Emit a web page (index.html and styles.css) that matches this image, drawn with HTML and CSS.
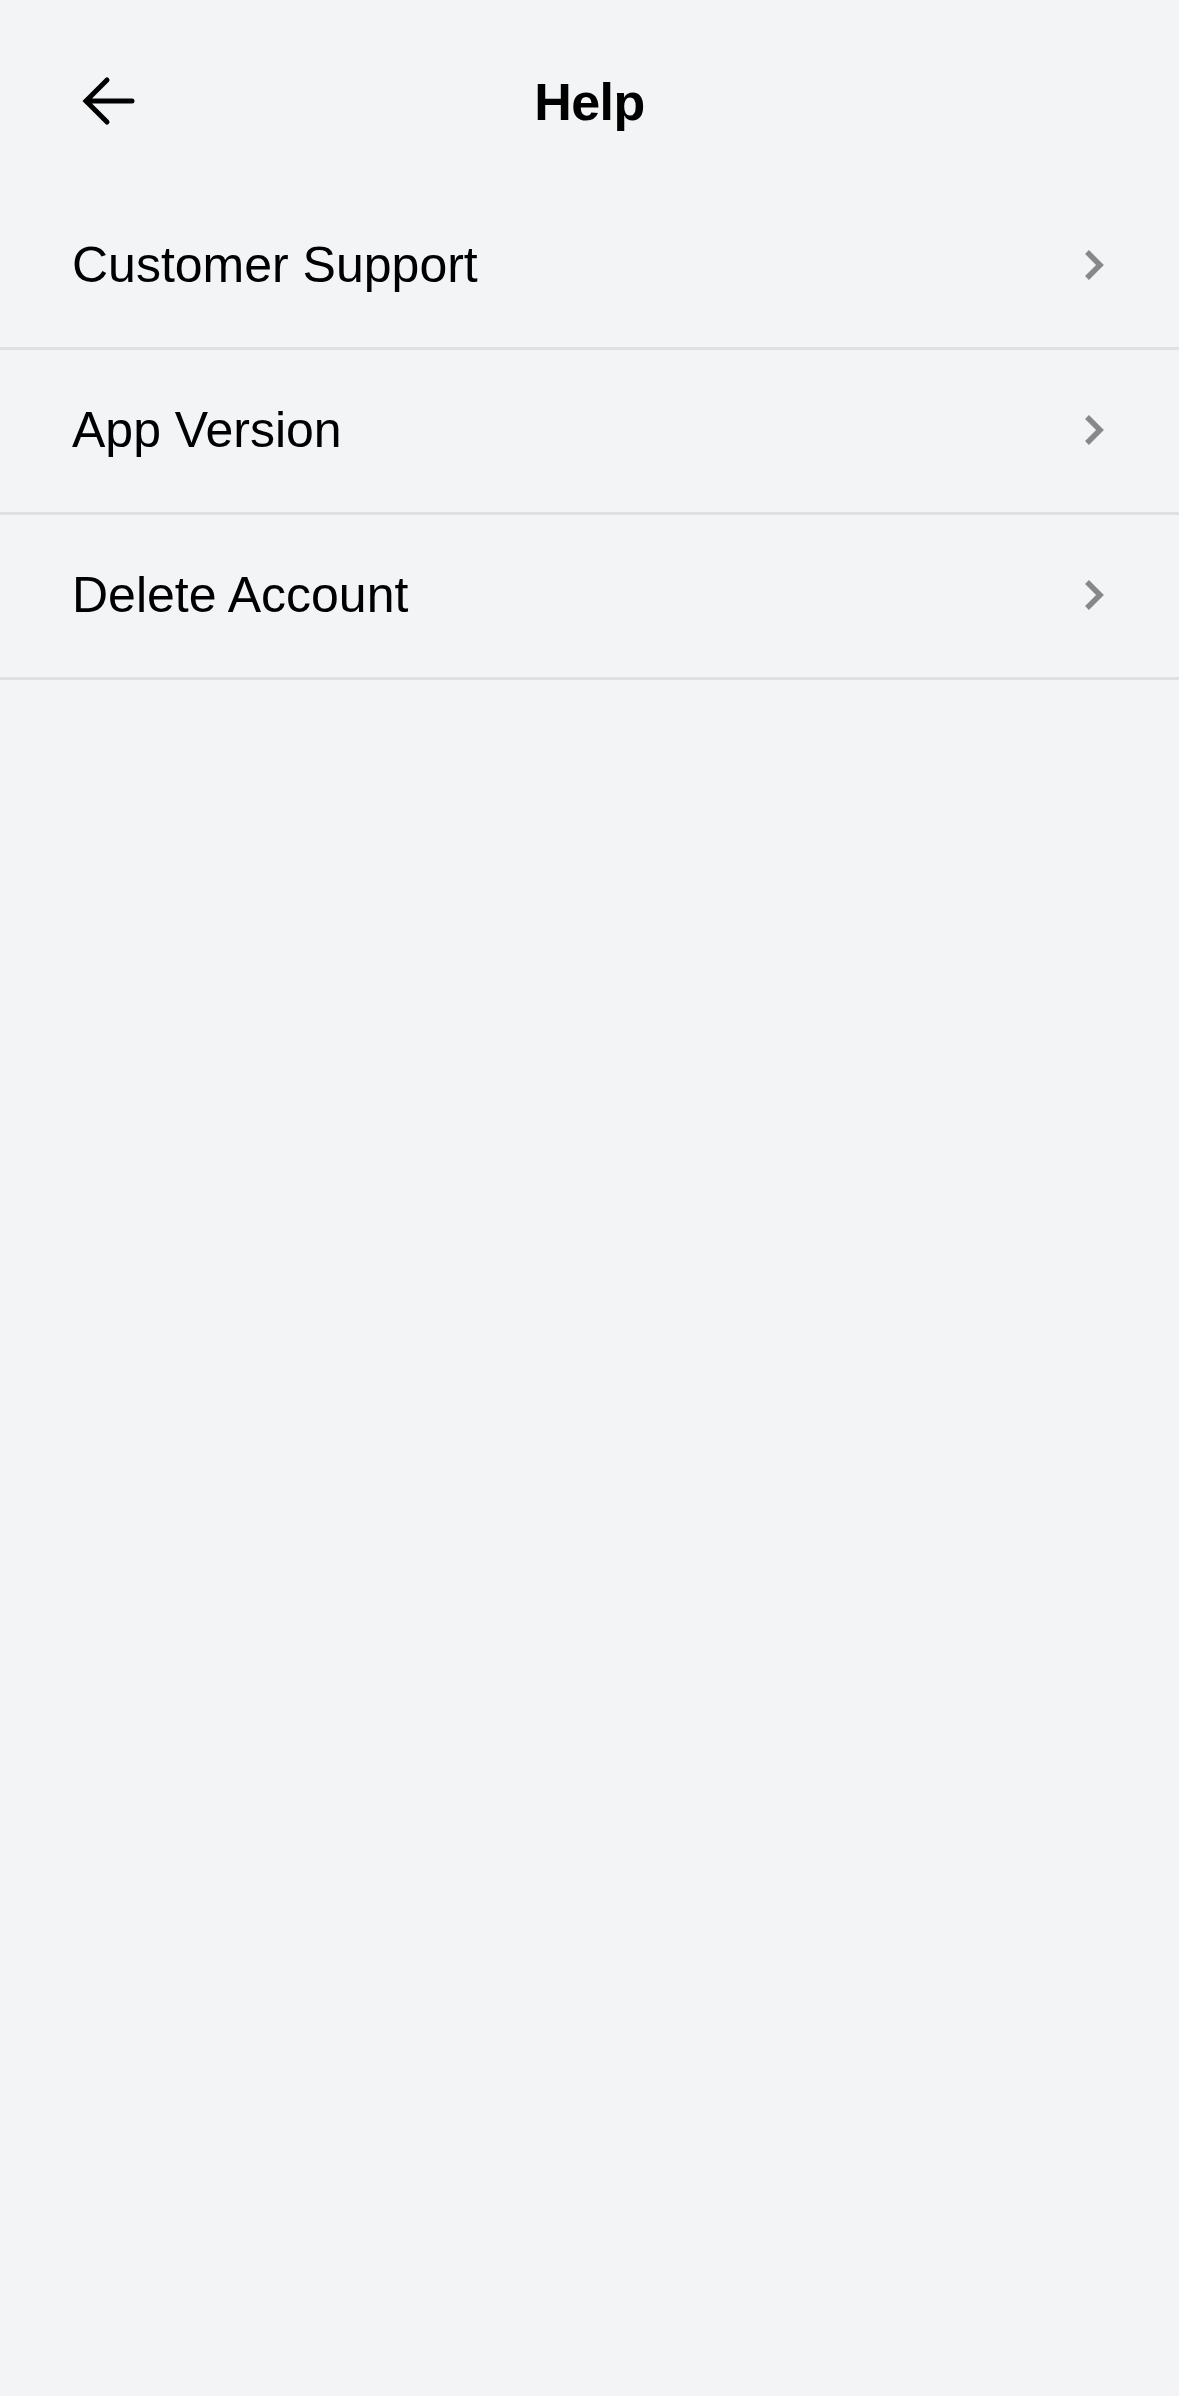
FILE: index.html
```html
<!DOCTYPE html>
<html lang="en">
<head>
<meta charset="utf-8">
<title>Help</title>
<link rel="stylesheet" href="styles.css">
</head>
<body>
<div class="screen">
  <header class="topbar">
    <div class="topbar-left">
      <button class="back" aria-label="Back">
        <svg width="60" height="50" viewBox="0 0 60 50" aria-hidden="true">
          <path d="M8 25 H54 M29 4 L8 25 L29 46" fill="none" stroke="#000" stroke-width="5" stroke-linecap="round" stroke-linejoin="miter"/>
        </svg>
      </button>
    </div>
    <h1 class="title">Help</h1>
    <div class="topbar-right"></div>
  </header>
  <ul class="menu">
    <li class="menu-row">
      <span class="menu-label">Customer Support</span>
      <svg class="chev" width="24" height="34" viewBox="0 0 24 34" aria-hidden="true"><path d="M5 3 L18 16 L5 29" fill="none" stroke="#888" stroke-width="5.5"/></svg>
    </li>
    <li class="menu-row">
      <span class="menu-label">App Version</span>
      <svg class="chev" width="24" height="34" viewBox="0 0 24 34" aria-hidden="true"><path d="M5 3 L18 16 L5 29" fill="none" stroke="#888" stroke-width="5.5"/></svg>
    </li>
    <li class="menu-row">
      <span class="menu-label">Delete Account</span>
      <svg class="chev" width="24" height="34" viewBox="0 0 24 34" aria-hidden="true"><path d="M5 3 L18 16 L5 29" fill="none" stroke="#888" stroke-width="5.5"/></svg>
    </li>
  </ul>
</div>
</body>
</html>
```

FILE: styles.css
```css
html, body {
  margin: 0;
  padding: 0;
  background: #f3f4f6;
}

body {
  font-family: "Liberation Sans", Arial, sans-serif;
  color: #000;
}

.screen {
  min-height: 2396px;
  background: #f3f4f6;
}

.topbar {
  display: grid;
  grid-template-columns: 1fr auto 1fr;
  align-items: center;
  height: 168px;
  padding-top: 17px;
}

.topbar-left {
  padding-left: 78px;
  display: flex;
  align-items: center;
}

.back {
  border: 0;
  background: none;
  padding: 0;
  margin: 0;
  display: block;
  line-height: 0;
}

.title {
  margin: 0;
  font-size: 52px;
  font-weight: 700;
  line-height: 1;
  letter-spacing: -0.6px;
  padding-top: 2px;
}

.menu {
  list-style: none;
  margin: 0;
  padding: 0;
}

.menu-row {
  display: flex;
  align-items: center;
  justify-content: space-between;
  height: 162px;
  padding: 0 71px 0 72px;
  border-bottom: 3px solid #dfe0e3;
}

.menu-label {
  font-size: 50px;
  line-height: 1;
  font-weight: 400;
  margin-top: -3px;
}

.chev {
  display: block;
  margin-right: 2px;
}
```
